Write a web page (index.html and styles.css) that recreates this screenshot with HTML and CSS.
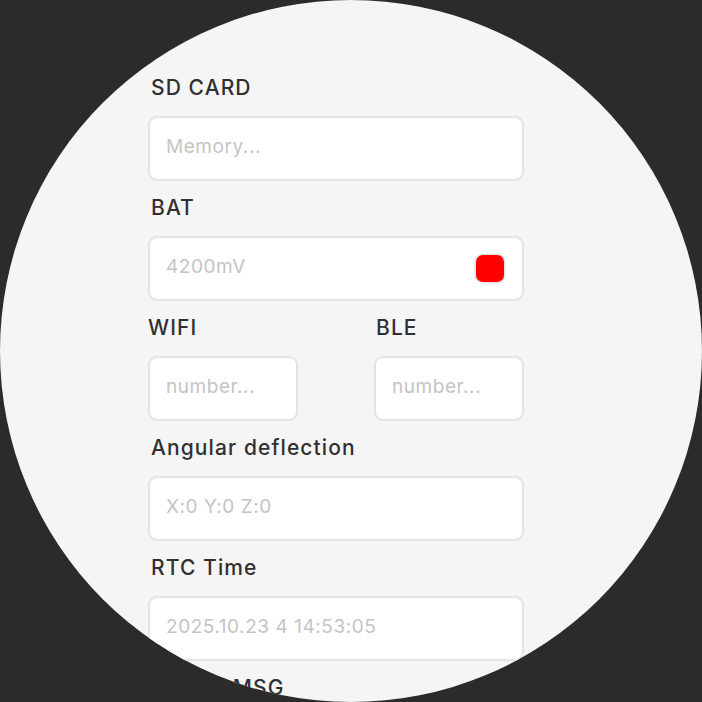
FILE: index.html
```html
<!DOCTYPE html>
<html lang="en">

<head>
    <meta charset="UTF-8">
    <meta name="viewport" content="width=device-width, initial-scale=1.0">
    <title>Device Status</title>
    <link rel="stylesheet" href="styles.css">
</head>

<body>
    <div class="screen">
        <div class="form">
            <div class="label">SD CARD</div>
            <div class="field"><span class="placeholder">Memory...</span></div>

            <div class="label">BAT</div>
            <div class="field">
                <span class="placeholder">4200mV</span>
                <span class="status-dot"></span>
            </div>

            <div class="pair">
                <div class="pair-item">
                    <div class="label label-pair">WIFI</div>
                    <div class="field"><span class="placeholder">number...</span></div>
                </div>
                <div class="pair-item">
                    <div class="label label-pair label-ble">BLE</div>
                    <div class="field"><span class="placeholder">number...</span></div>
                </div>
            </div>

            <div class="label">Angular deflection</div>
            <div class="field"><span class="placeholder">X:0 Y:0 Z:0</span></div>

            <div class="label">RTC Time</div>
            <div class="field"><span class="placeholder">2025.10.23 4 14:53:05</span></div>

            <div class="label">ERROR MSG</div>
            <div class="field"><span class="placeholder">...</span></div>
        </div>
    </div>
</body>

</html>
```

FILE: styles.css
```css
body,
html {
    margin: 0;
    padding: 0;
    width: 702px;
    height: 702px;
    overflow: hidden;
    background: #2b2b2b;
    font-family: Inter, "Open Sans", sans-serif;
}

.screen {
    width: 702px;
    height: 702px;
    border-radius: 50%;
    background: #f5f5f5;
    overflow: hidden;
}

.form {
    width: 376px;
    margin-left: 148px;
    padding-top: 61px;
}

.label {
    height: 24px;
    line-height: 24px;
    margin-top: 15px;
    margin-bottom: 16px;
    padding-left: 3px;
    font-size: 21px;
    font-weight: 500;
    letter-spacing: 1.1px;
    color: #303030;
}

.label-pair {
    padding-left: 0;
}

.label-ble {
    padding-left: 2px;
}

.field {
    display: flex;
    align-items: center;
    box-sizing: border-box;
    height: 65px;
    padding: 0 18px 4px 16px;
    border: 2px solid #e6e2e6;
    border-radius: 9px;
    background: #fff;
}

.placeholder {
    font-size: 19px;
    letter-spacing: 0.55px;
    color: #c4c4c4;
    white-space: nowrap;
    overflow: hidden;
}

.status-dot {
    width: 28px;
    height: 27px;
    margin-left: auto;
    margin-top: 4px;
    border-radius: 7px;
    background: #ff0000;
    box-shadow: 0 0 0 1.5px #e4e2e4;
}

.pair {
    display: flex;
    justify-content: space-between;
}

.pair-item {
    width: 150px;
}
```
